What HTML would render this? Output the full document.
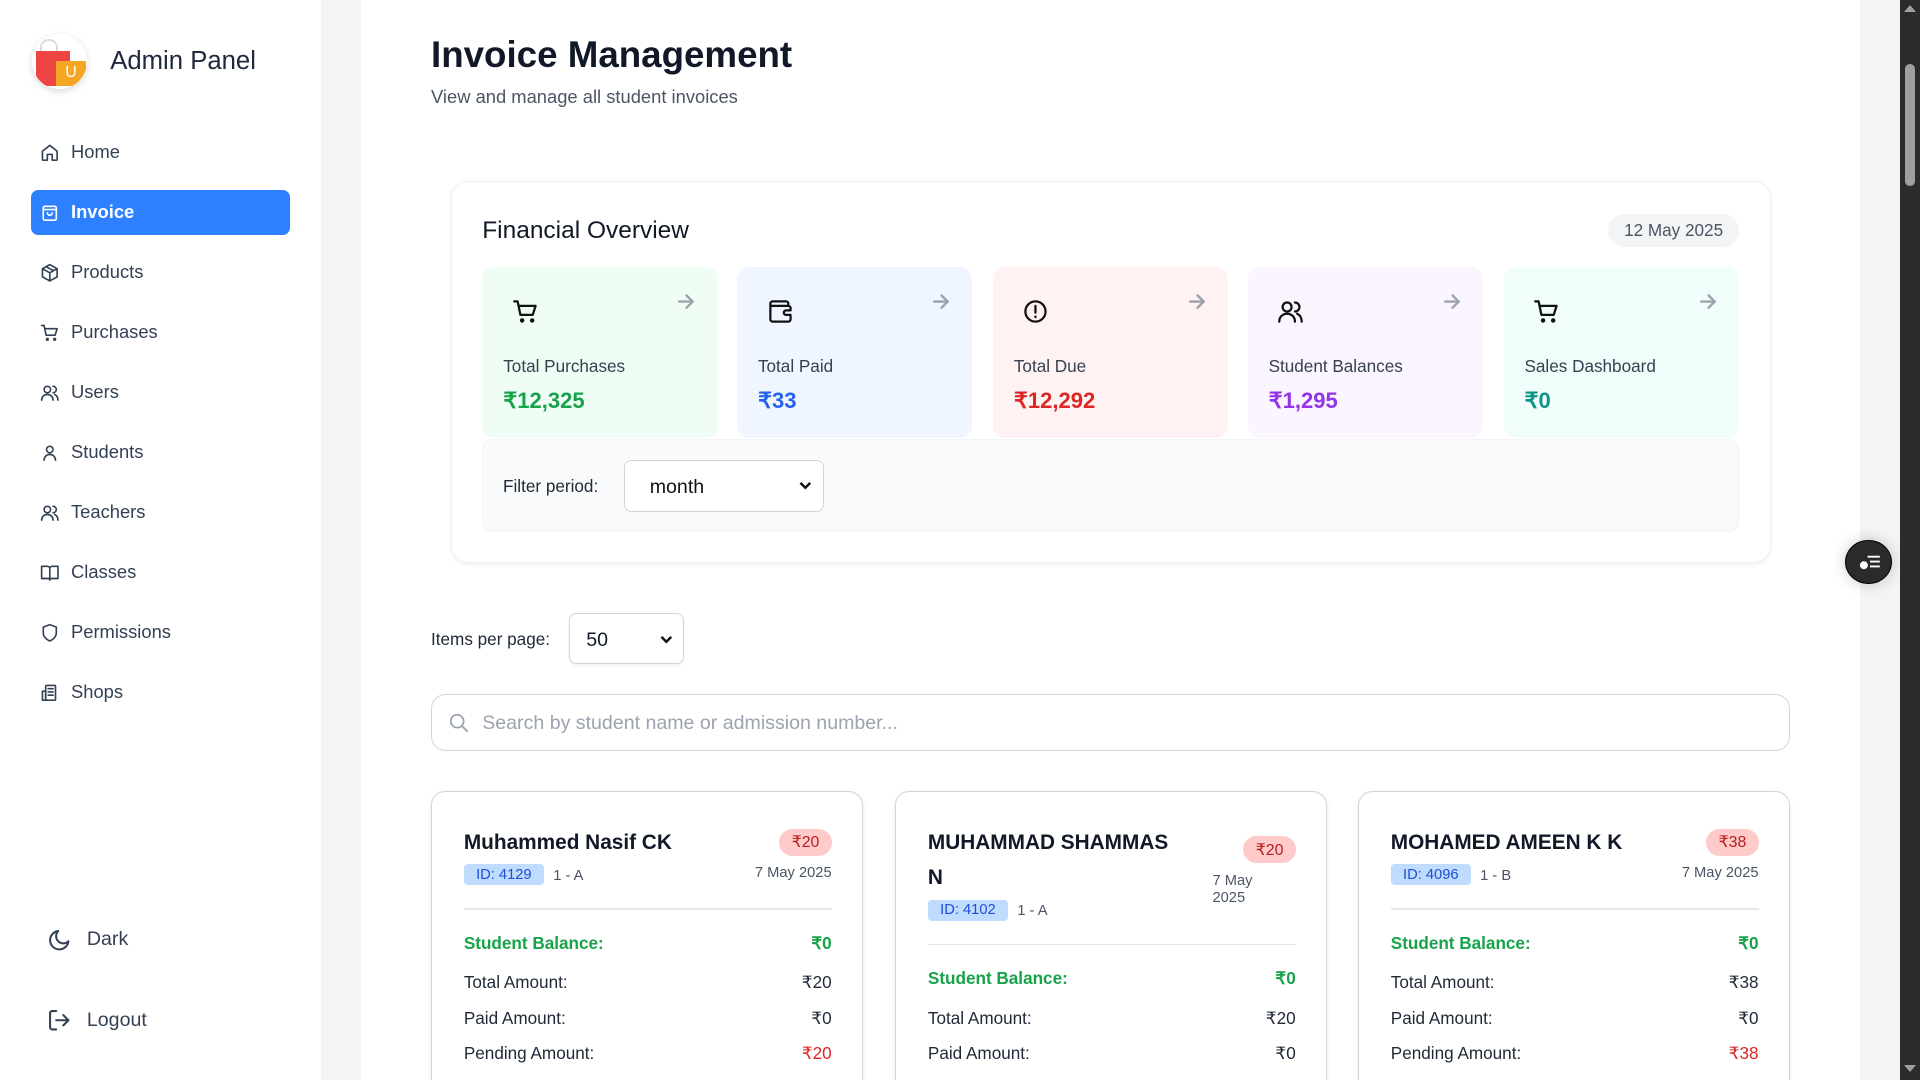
<!DOCTYPE html>
<html><head><meta charset="utf-8"><style>
html{zoom:1.22449;background:#fff}
*{box-sizing:border-box;margin:0;padding:0}
html,body{height:882px;overflow:hidden}
body{width:1568px;font-family:"Liberation Sans",sans-serif;color:#111827}
#wrap{position:relative;width:1568px;height:882px;overflow:hidden;background:#f3f4f6}
.abs{position:absolute}
.side{left:0;top:0;width:262px;height:882px;background:#fff}
.nav{position:absolute;left:25px;width:212px;height:37px;display:flex;align-items:center;padding-left:8px;font-size:15px;color:#334155}
.nav svg{width:16px;height:16px;margin-right:9px;fill:none;stroke:currentColor;stroke-width:2;stroke-linecap:round;stroke-linejoin:round}
.nav.act{background:#2d80ff;color:#fff;border-radius:6px;font-weight:bold}
.main{left:295px;top:0;width:1224px;height:882px;background:#fff}
.sc{position:absolute;top:218px;width:192px;height:140px;border-radius:10px}
.sc svg.i{position:absolute;left:24px;top:25px;width:22px;height:22px;fill:none;stroke:#111;stroke-width:2;stroke-linecap:round;stroke-linejoin:round}
.sc svg.a{position:absolute;right:18px;top:21px;width:14px;height:14px;fill:none;stroke:#9ca3af;stroke-width:2;stroke-linecap:round}
.sc .l{position:absolute;left:17px;top:73px;font-size:14px;color:#374151}
.sc .v{position:absolute;left:17px;top:99px;font-size:18px;font-weight:bold}
.card{position:absolute;top:646px;width:353px;height:260px;border:1px solid #d1d5db;border-radius:12px;background:#fff;box-shadow:0 1px 4px rgba(0,0,0,.08)}
.card .n{position:absolute;left:26px;top:28px;font-size:17px;font-weight:bold;color:#111827;line-height:28px}
.badge{position:absolute;right:25px;background:#fecaca;color:#b91c1c;font-size:13px;padding:3px 10px;border-radius:12px}
.id{position:absolute;left:26px;background:#bfdbfe;color:#1d4ed8;font-size:12px;padding:2px 10px;border-radius:3px}
.cls{position:absolute;font-size:12px;color:#4b5563}
.date{position:absolute;right:25px;font-size:12px;color:#4b5563;text-align:left}
.hr{position:absolute;left:26px;right:25px;height:1px;background:#e5e7eb}
.row{position:absolute;left:26px;right:25px;display:flex;justify-content:space-between;font-size:14px;color:#1f2937}
.chev{position:absolute;right:8px;top:14px}
</style></head><body><div id="wrap">
<div class="abs side">
  <div class="abs" style="left:26px;top:28px;width:45px;height:45px;border-radius:50%;background:#fff;box-shadow:0 2px 6px rgba(0,0,0,.15);overflow:hidden">
    <div class="abs" style="left:7px;top:4px;width:14px;height:12px;border:2px solid #ddd;border-bottom:none;border-radius:7px 7px 0 0"></div>
    <div class="abs" style="left:3px;top:14px;width:28px;height:28px;background:#ef4444"></div>
    <div class="abs" style="left:20px;top:22px;width:24px;height:20px;background:#f5a623;color:#fff;font-size:13px;text-align:center;line-height:20px">U</div>
  </div>
  <div class="abs" style="left:90px;top:38px;font-size:21px;color:#1e293b">Admin Panel</div>
  <div class="nav" style="top:106px"><svg viewBox="0 0 24 24"><path d="M3 10l9-7 9 7v10a1 1 0 0 1-1 1h-5v-7H9v7H4a1 1 0 0 1-1-1z"/></svg>Home</div>
  <div class="nav act" style="top:155px"><svg viewBox="0 0 24 24"><rect x="4" y="4" width="16" height="17" rx="2"/><path d="M4 8h16M9 12a3 3 0 0 0 6 0"/></svg>Invoice</div>
  <div class="nav" style="top:204px"><svg viewBox="0 0 24 24"><path d="M12 2l9 5v10l-9 5-9-5V7z M3 7l9 5 9-5 M12 12v10 M7.5 4.5l9 5"/></svg>Products</div>
  <div class="nav" style="top:253px"><svg viewBox="0 0 24 24"><path d="M2 3h3l2.5 12h11L21 7H6"/><circle cx="9" cy="20" r="1"/><circle cx="18" cy="20" r="1"/></svg>Purchases</div>
  <div class="nav" style="top:302px"><svg viewBox="0 0 24 24"><circle cx="9" cy="8" r="4"/><path d="M2 21c0-4 3-7 7-7s7 3 7 7M16 4a4 4 0 0 1 0 8M18 14c2 1 4 3 4 7"/></svg>Users</div>
  <div class="nav" style="top:351px"><svg viewBox="0 0 24 24"><circle cx="12" cy="8" r="4"/><path d="M5 21c0-4 3-7 7-7s7 3 7 7"/></svg>Students</div>
  <div class="nav" style="top:400px"><svg viewBox="0 0 24 24"><circle cx="9" cy="8" r="4"/><path d="M2 21c0-4 3-7 7-7s7 3 7 7M16 4a4 4 0 0 1 0 8M18 14c2 1 4 3 4 7"/></svg>Teachers</div>
  <div class="nav" style="top:449px"><svg viewBox="0 0 24 24"><path d="M2 4h7a3 3 0 0 1 3 3v14a2 2 0 0 0-2-2H2zM22 4h-7a3 3 0 0 0-3 3v14a2 2 0 0 1 2-2h8z"/></svg>Classes</div>
  <div class="nav" style="top:498px"><svg viewBox="0 0 24 24"><path d="M12 22s8-3 8-10V5l-8-3-8 3v7c0 7 8 10 8 10z"/></svg>Permissions</div>
  <div class="nav" style="top:547px"><svg viewBox="0 0 24 24"><rect x="7" y="3" width="12" height="18" rx="1"/><path d="M3 10h4v11H3zM10 7h6M10 11h6M10 15h6"/></svg>Shops</div>
  <div class="nav" style="top:749px;left:30px;font-size:16px"><svg viewBox="0 0 24 24" style="width:20px;height:20px;margin-right:13px"><path d="M21 13A9 9 0 1 1 11 3a7 7 0 0 0 10 10z"/></svg>Dark</div>
  <div class="nav" style="top:815px;left:30px;font-size:16px"><svg viewBox="0 0 24 24" style="width:20px;height:20px;margin-right:13px"><path d="M9 21H5a2 2 0 0 1-2-2V5a2 2 0 0 1 2-2h4M16 17l5-5-5-5M21 12H9"/></svg>Logout</div>
</div>
<div class="abs main">
  <div class="abs" style="left:57px;top:28px;font-size:30px;font-weight:bold;color:#111827">Invoice Management</div>
  <div class="abs" style="left:57px;top:70px;font-size:15px;color:#4b5563">View and manage all student invoices</div>
</div>
<div class="abs" style="left:368px;top:148px;width:1078px;height:312px;border:1px solid #f0f0f0;border-radius:14px;background:#fff;box-shadow:0 1px 4px rgba(0,0,0,.06)">
  <div class="abs" style="left:25px;top:28px;font-size:20px;color:#111827">Financial Overview</div>
  <div class="abs" style="right:25px;top:26px;background:#f3f4f6;color:#4b5563;font-size:14px;padding:5px 13px;border-radius:14px">12 May 2025</div>
  <div class="abs" style="left:25px;top:210px;width:1026px;height:76px;background:#f8fafc;border-radius:8px;border:1px solid #f1f5f9"></div>
  <div class="abs" style="left:42px;top:240px;font-size:14px;color:#1f2937">Filter period:</div>
  <div class="abs" style="left:141px;top:227px;width:163px;height:42px;border:1px solid #d1d5db;border-radius:6px;background:#fff;font-size:16px;padding:12px 20px;color:#111">month<svg class="chev" width="12" height="12" viewBox="0 0 12 12" fill="none" stroke="#111" stroke-width="2"><path d="M2 4l4 4 4-4"/></svg></div>
</div>
<div class="sc" style="left:394px;background:#f0fdf4"><svg class="i" viewBox="0 0 24 24"><path d="M2 3h3l2.5 12h11L21 7H6"/><circle cx="9" cy="20" r="1"/><circle cx="18" cy="20" r="1"/></svg><svg class="a" viewBox="0 0 14 14"><path d="M1 7h11M7 2l5 5-5 5"/></svg><div class="l">Total Purchases</div><div class="v" style="color:#16a34a">₹12,325</div></div>
<div class="sc" style="left:602px;background:#eff6ff"><svg class="i" viewBox="0 0 24 24"><path d="M19 7V5a2 2 0 0 0-2-2H5a2 2 0 0 0-2 2v14a2 2 0 0 0 2 2h14a2 2 0 0 0 2-2v-3M3 7h16a2 2 0 0 1 2 2v2h-4a2 2 0 0 0 0 4h4"/></svg><svg class="a" viewBox="0 0 14 14"><path d="M1 7h11M7 2l5 5-5 5"/></svg><div class="l">Total Paid</div><div class="v" style="color:#2563eb">₹33</div></div>
<div class="sc" style="left:811px;background:#fef2f2"><svg class="i" viewBox="0 0 24 24"><circle cx="12" cy="12" r="9"/><path d="M12 7v6M12 16.5v.5"/></svg><svg class="a" viewBox="0 0 14 14"><path d="M1 7h11M7 2l5 5-5 5"/></svg><div class="l">Total Due</div><div class="v" style="color:#dc2626">₹12,292</div></div>
<div class="sc" style="left:1019px;background:#faf5ff"><svg class="i" viewBox="0 0 24 24"><circle cx="9" cy="8" r="4"/><path d="M2 21c0-4 3-7 7-7s7 3 7 7M16 4a4 4 0 0 1 0 8M18 14c2 1 4 3 4 7"/></svg><svg class="a" viewBox="0 0 14 14"><path d="M1 7h11M7 2l5 5-5 5"/></svg><div class="l">Student Balances</div><div class="v" style="color:#9333ea">₹1,295</div></div>
<div class="sc" style="left:1228px;background:#f0fdfa"><svg class="i" viewBox="0 0 24 24"><path d="M2 3h3l2.5 12h11L21 7H6"/><circle cx="9" cy="20" r="1"/><circle cx="18" cy="20" r="1"/></svg><svg class="a" viewBox="0 0 14 14"><path d="M1 7h11M7 2l5 5-5 5"/></svg><div class="l">Sales Dashboard</div><div class="v" style="color:#0d9488">₹0</div></div>

<div class="abs" style="left:352px;top:514px;font-size:14px;color:#1f2937">Items per page:</div>
<div class="abs" style="left:465px;top:501px;width:94px;height:41px;border:1px solid #d1d5db;border-radius:6px;background:#fff;font-size:16px;padding:12px 13px;box-shadow:0 1px 2px rgba(0,0,0,.06)">50<svg class="chev" width="12" height="12" viewBox="0 0 12 12" fill="none" stroke="#111" stroke-width="2"><path d="M2 4l4 4 4-4"/></svg></div>
<div class="abs" style="left:352px;top:567px;width:1110px;height:46px;border:1px solid #d1d5db;border-radius:12px;background:#fff">
  <svg class="abs" style="left:13px;top:14px" width="18" height="18" viewBox="0 0 24 24" fill="none" stroke="#9ca3af" stroke-width="2" stroke-linecap="round"><circle cx="10" cy="10" r="7"/><path d="M15.5 15.5L21 21"/></svg>
  <div class="abs" style="left:41px;top:14px;font-size:16px;color:#9ca3af">Search by student name or admission number...</div>
</div>

<div class="card" style="left:352px"><div class="n">Muhammed Nasif CK</div><div class="badge" style="top:30px">₹20</div><div class="id" style="top:59px">ID: 4129</div><div class="cls" style="left:99px;top:62px">1 - A</div><div class="date" style="top:60px">7 May 2025</div><div class="hr" style="top:95px"></div>
<div class="row" style="top:115px;color:#16a34a;font-weight:bold"><span>Student Balance:</span><span>₹0</span></div>
<div class="row" style="top:147px"><span>Total Amount:</span><span>₹20</span></div>
<div class="row" style="top:176px"><span>Paid Amount:</span><span>₹0</span></div>
<div class="row" style="top:205px"><span>Pending Amount:</span><span style="color:#dc2626">₹20</span></div></div>

<div class="card" style="left:731px"><div class="n" style="width:200px">MUHAMMAD SHAMMAS N</div><div class="badge" style="top:36px">₹20</div><div class="id" style="top:88px">ID: 4102</div><div class="cls" style="left:99px;top:91px">1 - A</div><div class="date" style="top:66px;right:53px;width:40px;line-height:14px">7 May 2025</div><div class="hr" style="top:124px"></div>
<div class="row" style="top:144px;color:#16a34a;font-weight:bold"><span>Student Balance:</span><span>₹0</span></div>
<div class="row" style="top:176px"><span>Total Amount:</span><span>₹20</span></div>
<div class="row" style="top:205px"><span>Paid Amount:</span><span>₹0</span></div></div>

<div class="card" style="left:1109px"><div class="n">MOHAMED AMEEN K K</div><div class="badge" style="top:30px">₹38</div><div class="id" style="top:59px">ID: 4096</div><div class="cls" style="left:99px;top:62px">1 - B</div><div class="date" style="top:60px">7 May 2025</div><div class="hr" style="top:95px"></div>
<div class="row" style="top:115px;color:#16a34a;font-weight:bold"><span>Student Balance:</span><span>₹0</span></div>
<div class="row" style="top:147px"><span>Total Amount:</span><span>₹38</span></div>
<div class="row" style="top:176px"><span>Paid Amount:</span><span>₹0</span></div>
<div class="row" style="top:205px"><span>Pending Amount:</span><span style="color:#dc2626">₹38</span></div></div>

<div class="abs" style="left:1507px;top:441px;width:38px;height:36px;border-radius:50%;background:#2b2b2b;border:1px solid #000;box-shadow:0 0 12px rgba(0,0,0,.2)">
  <svg class="abs" style="left:10px;top:10px" width="18" height="16" viewBox="0 0 18 16" fill="none" stroke="#fff" stroke-width="1.5"><path d="M7 3h10M9 7h8M9 11h8"/><circle cx="4" cy="10" r="2.5" fill="#fff"/></svg>
</div>
<div class="abs" style="left:1552px;top:0;width:16px;height:882px;background:#2b2b2b">
  <div class="abs" style="left:4px;top:52px;width:8px;height:100px;background:#9f9f9f;border-radius:4px"></div>
  <div class="abs" style="left:3px;top:4px;width:0;height:0;border-left:5px solid transparent;border-right:5px solid transparent;border-bottom:6px solid #9f9f9f"></div>
  <div class="abs" style="left:3px;top:870px;width:0;height:0;border-left:5px solid transparent;border-right:5px solid transparent;border-top:6px solid #9f9f9f"></div>
</div>
</div></body></html>
